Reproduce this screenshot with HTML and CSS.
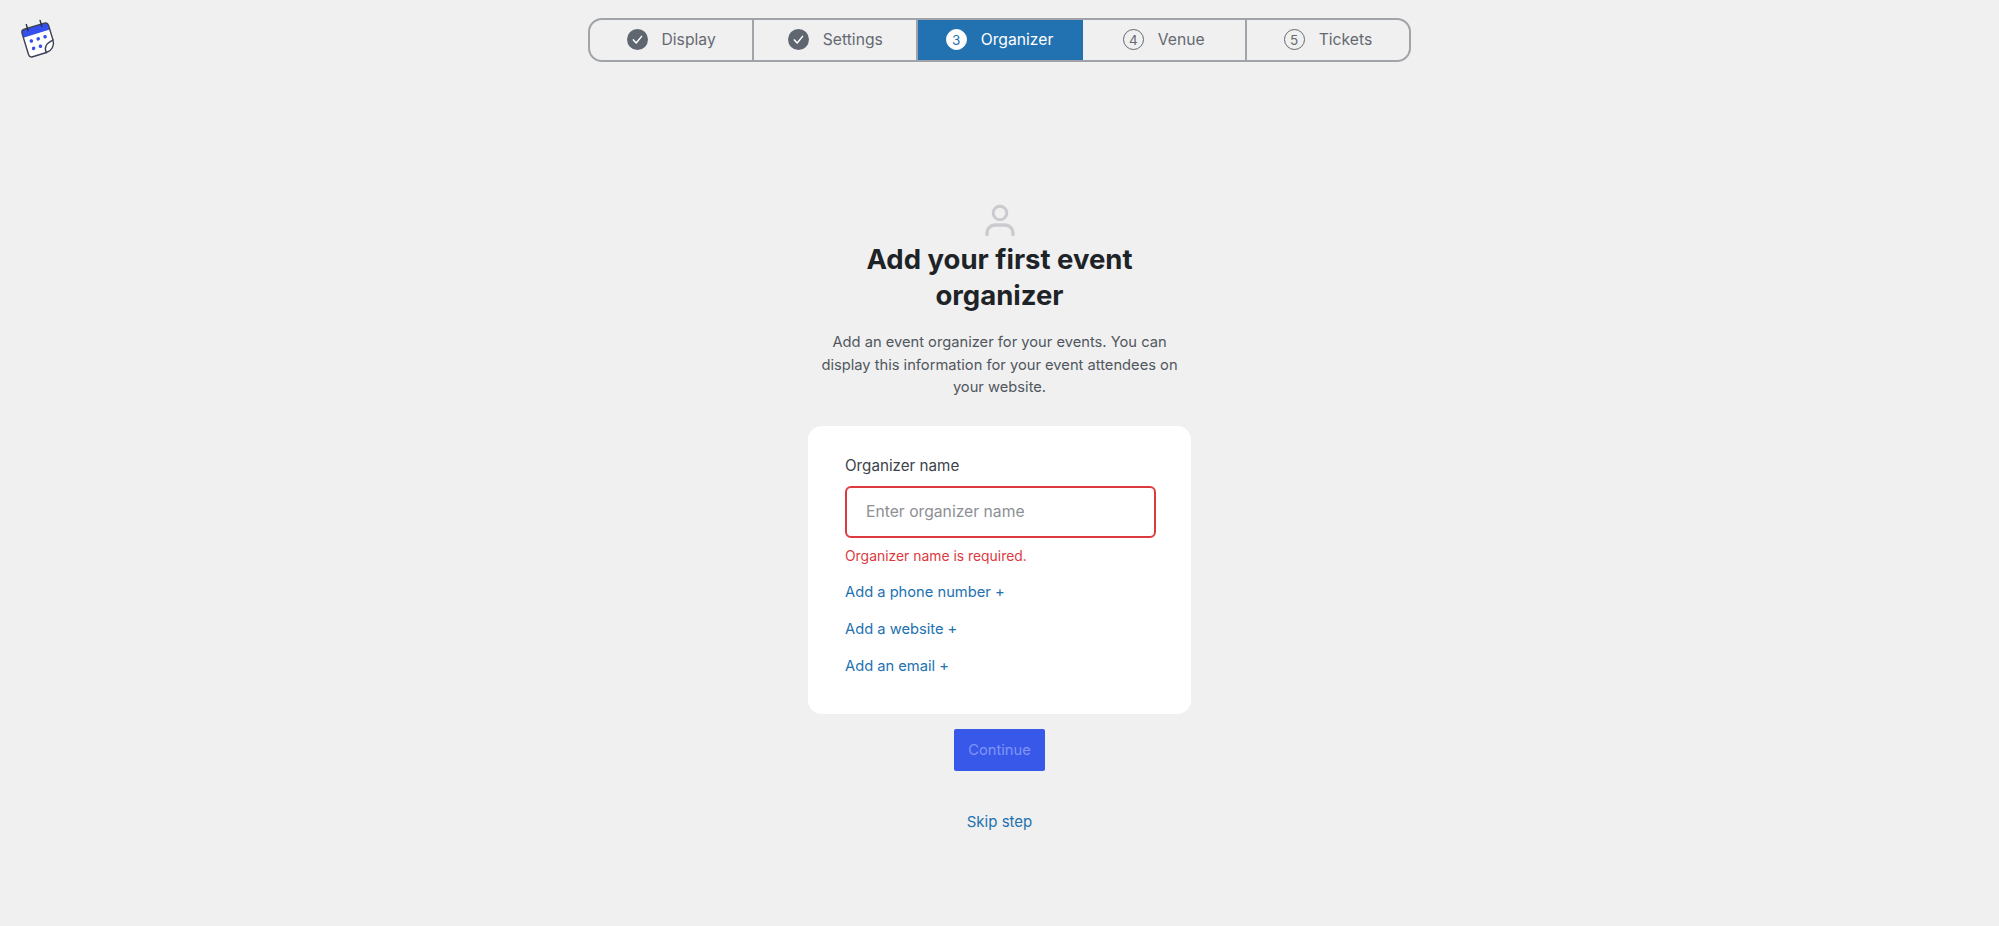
FILE: index.html
```html
<!DOCTYPE html>
<html lang="en">
    <head>
        <meta charset="UTF-8" />
        <meta name="viewport" content="width=device-width, initial-scale=1.0" />
        <link rel="stylesheet" href="styles.css">
        <title>Onboarding - Organizer</title>
    </head>
    <body>
        <header class="topbar">
            <svg class="logo" width="40" height="42" viewBox="0 0 36 38" fill="none">
                <g transform="rotate(-17 18 20)">
                    <path d="M6 13 V30 a3 3 0 0 0 3 3 H22 L31 24 V10 a3 3 0 0 0 -3 -3 H9 a3 3 0 0 0 -3 3 Z" fill="#fff" />
                    <path d="M6 14 V10 a3 3 0 0 1 3 -3 H28 a3 3 0 0 1 3 3 V14 Z" fill="#334fee" />
                    <path d="M22 33 H9 a3 3 0 0 1 -3 -3 V10 a3 3 0 0 1 3 -3 H28 a3 3 0 0 1 3 3 V24" stroke="#3c4257" stroke-width="1.3" />
                    <path d="M12 3.5 V9 M25 3.5 V9" stroke="#2b2f40" stroke-width="1.3" stroke-linecap="round" />
                    <path d="M22 33 C21 28 24 25 31 24 C31 29 27 33 22 33 Z" fill="#fff" stroke="#3c4257" stroke-width="1.3" />
                    <circle cx="12" cy="19" r="1.6" fill="#334fee" />
                    <circle cx="18.5" cy="19" r="1.6" fill="#334fee" />
                    <circle cx="25" cy="19" r="1.6" fill="#334fee" />
                    <circle cx="12" cy="26" r="1.6" fill="#334fee" />
                    <circle cx="18.5" cy="26" r="1.6" fill="#334fee" />
                </g>
            </svg>
            <nav class="steps">
                <div class="step">
                    <svg class="step-check" width="21" height="21" viewBox="0 0 21 21">
                        <circle cx="10.5" cy="10.5" r="10.5" fill="#5f6670" />
                        <path d="M6.4 10.9 L9.2 14 L14.6 7.4" fill="none" stroke="#fff" stroke-width="1.5" stroke-linecap="round" stroke-linejoin="round" />
                    </svg>
                    <span>Display</span>
                </div>
                <div class="step">
                    <svg class="step-check" width="21" height="21" viewBox="0 0 21 21">
                        <circle cx="10.5" cy="10.5" r="10.5" fill="#5f6670" />
                        <path d="M6.4 10.9 L9.2 14 L14.6 7.4" fill="none" stroke="#fff" stroke-width="1.5" stroke-linecap="round" stroke-linejoin="round" />
                    </svg>
                    <span>Settings</span>
                </div>
                <div class="step active">
                    <span class="step-num">3</span>
                    <span>Organizer</span>
                </div>
                <div class="step">
                    <span class="step-num">4</span>
                    <span>Venue</span>
                </div>
                <div class="step">
                    <span class="step-num">5</span>
                    <span>Tickets</span>
                </div>
            </nav>
        </header>

        <main class="content">
            <svg class="person" width="30" height="32" viewBox="0 0 30 32" fill="none">
                <circle cx="15" cy="9" r="6.8" stroke="#c9cbce" stroke-width="3" />
                <path d="M2 30.5 V29 a8 8 0 0 1 8 -8 H20 a8 8 0 0 1 8 8 V30.5" stroke="#c9cbce" stroke-width="3.4" stroke-linecap="round" />
            </svg>
            <h1 class="title">Add your first event organizer</h1>
            <p class="intro">Add an event organizer for your events. You can display this information for your event attendees on your website.</p>

            <form class="card">
                <label class="field-label" for="organizer-name">Organizer name</label>
                <input class="field-input" id="organizer-name" type="text" placeholder="Enter organizer name" />
                <p class="field-error">Organizer name is required.</p>
                <a class="add-link" href="#">Add a phone number +</a>
                <a class="add-link" href="#">Add a website +</a>
                <a class="add-link" href="#">Add an email +</a>
            </form>

            <button class="continue-btn" type="button">Continue</button>
            <a class="skip-link" href="#">Skip step</a>
        </main>
    </body>
</html>
```

FILE: styles.css
```css
* {
    padding: 0;
    margin: 0;
    box-sizing: border-box;
}

body {
    min-height: 100vh;
    background: #f0f0f0;
    font-family: "Inter", "Liberation Sans", sans-serif;
    color: #1d2327;
}

.topbar {
    display: grid;
    grid-template-columns: 1fr auto 1fr;
    align-items: start;
    padding-top: 18px;
}

.logo {
    display: block;
    margin-left: 18px;
}

.steps {
    display: flex;
    width: 823px;
    height: 44px;
    border: 2px solid #a0a3a7;
    border-radius: 14px;
    overflow: hidden;
}

.step {
    flex: 1;
    display: flex;
    align-items: center;
    justify-content: center;
    gap: 14px;
    padding-bottom: 1px;
    font-size: 15.7px;
    color: #646970;
    border-right: 2px solid #a0a3a7;
}

.step:last-child {
    border-right: 0;
}

.step.active {
    background: #2271b1;
    color: #fff;
    border-right-color: #2271b1;
}

.step-check {
    flex: none;
}

.step-num {
    width: 21px;
    height: 21px;
    display: flex;
    align-items: center;
    justify-content: center;
    border: 1px solid #646970;
    border-radius: 50%;
    font-size: 13.5px;
}

.step.active .step-num {
    background: #fff;
    border-color: #fff;
    color: #2271b1;
}

.content {
    display: flex;
    flex-direction: column;
    align-items: center;
    padding-top: 142px;
}

.person {
    display: block;
}

.title {
    width: 340px;
    margin-top: 5px;
    font-size: 27.5px;
    line-height: 36px;
    font-weight: 700;
    text-align: center;
}

.intro {
    width: 370px;
    margin-top: 18px;
    font-size: 14.7px;
    line-height: 22.5px;
    color: #50575e;
    text-align: center;
}

.card {
    width: 383px;
    height: 288px;
    margin-top: 27px;
    padding: 29px 35px 0 37px;
    display: flex;
    flex-direction: column;
    align-items: flex-start;
    background: #fff;
    border-radius: 14px;
}

.field-label {
    font-size: 15.2px;
    line-height: 22px;
    color: #3c434a;
}

.field-input {
    width: 100%;
    height: 52px;
    margin-top: 9px;
    padding: 0 19px;
    border: 2px solid #dc3a3f;
    border-radius: 6px;
    background: #fff;
    font-family: inherit;
    font-size: 15.7px;
    outline: none;
}

.field-input::placeholder {
    color: #8c8f94;
    opacity: 1;
}

.field-error {
    margin-top: 8px;
    font-size: 13.9px;
    line-height: 20px;
    color: #dc3a3f;
}

.add-link {
    margin-top: 16px;
    font-size: 14.7px;
    line-height: 20px;
    color: #2271b1;
    text-decoration: none;
}

.add-link + .add-link {
    margin-top: 17px;
}

.continue-btn {
    all: unset;
    width: 91px;
    height: 42px;
    margin-top: 15px;
    text-align: center;
    background: #3858e9;
    border-radius: 2px;
    font-size: 14.7px;
    line-height: 42px;
    color: #7f95f5;
}

.skip-link {
    margin-top: 41px;
    font-size: 15px;
    line-height: 20px;
    color: #2271b1;
    text-decoration: none;
}
```
